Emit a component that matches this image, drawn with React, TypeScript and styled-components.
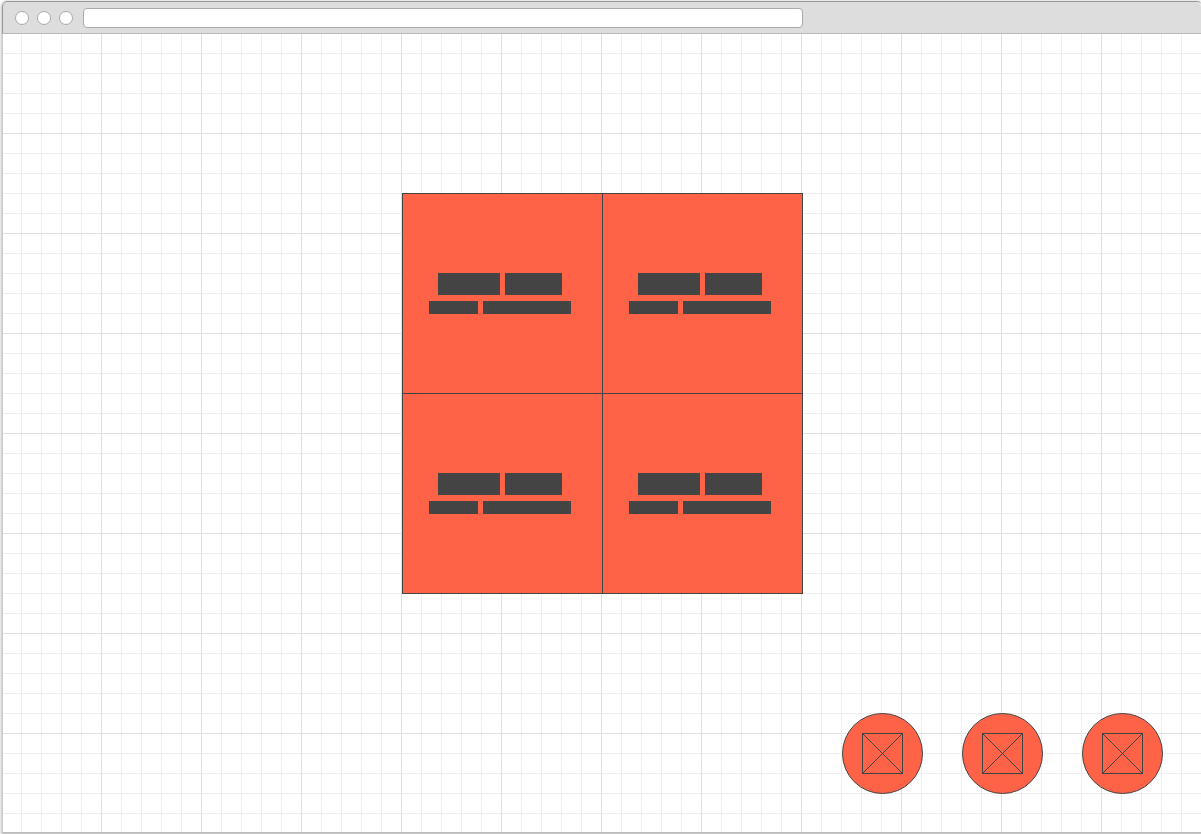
import React from "react";
import styled, { createGlobalStyle } from "styled-components";

const ink = "#444444";
const tomato = "#ff6347";

const GlobalStyle = createGlobalStyle`
  *, *::before, *::after { box-sizing: border-box; }
  html { overflow: clip; }
  body {
    margin: 0;
    background: #ffffff;
    font-family: "Liberation Sans", Arial, sans-serif;
  }
`;

const Window = styled.div`
  display: flex;
  flex-direction: column;
  min-height: calc(100vh - 2px);
  margin: 1px -1px 1px 2px;
  border: 1px solid #cccccc;
  border-top-color: #999999;
  border-bottom-color: #bbbbbb;
  border-radius: 5px 5px 0 0;
  box-shadow: 0 1px 3px 1px rgba(0, 0, 0, 0.25);
`;

const TitleBar = styled.header`
  display: flex;
  align-items: center;
  gap: 10px;
  height: 32px;
  margin-left: -1px;
  padding: 0 12px;
  border-left: 1px solid #999999;
  border-bottom: 1px solid #bbbbbb;
  border-radius: 5px 5px 0 0;
  background: #dddddd;
`;

const WindowControls = styled.div`
  display: flex;
  gap: 8px;
`;

const WindowButton = styled.button`
  width: 14px;
  height: 14px;
  padding: 0;
  border: 1px solid #aaaaaa;
  border-radius: 50%;
  background: #ffffff;
`;

const AddressBar = styled.input`
  width: 720px;
  min-width: 0;
  height: 20px;
  padding: 0 6px;
  border: 1px solid #aaaaaa;
  border-radius: 4px;
  background: #ffffff;
  font-size: 12px;
  outline: none;
`;

const Canvas = styled.main`
  flex: 1;
  display: flex;
  flex-direction: column;
  padding: 159px 38px 38px 39px;
  background-color: #ffffff;
  background-image:
    linear-gradient(to right, #e0e0e0 1px, transparent 1px),
    linear-gradient(to bottom, #e0e0e0 1px, transparent 1px),
    linear-gradient(to right, #eeeeee 1px, transparent 1px),
    linear-gradient(to bottom, #eeeeee 1px, transparent 1px);
  background-size: 100px 100px, 100px 100px, 20px 20px, 20px 20px;
  background-position: 98px 99px, 98px 99px, 18px 19px, 18px 19px;
`;

const Board = styled.section`
  display: grid;
  grid-template-columns: repeat(2, 200px);
  grid-auto-rows: 200px;
  align-self: center;
  border: solid ${ink};
  border-width: 1px 0 0 1px;
`;

const Tile = styled.article`
  display: flex;
  flex-direction: column;
  align-items: center;
  justify-content: center;
  gap: 6px;
  padding-right: 5px;
  border: solid ${ink};
  border-width: 0 1px 1px 0;
  background: ${tomato};
`;

const WordRow = styled.div`
  display: flex;
  gap: 5px;
`;

const Word = styled.span<{ $width: number; $height: number }>`
  width: ${(p) => p.$width}px;
  height: ${(p) => p.$height}px;
  background: ${ink};
`;

const Actions = styled.nav`
  display: flex;
  justify-content: flex-end;
  gap: 39px;
  margin-top: auto;
`;

const RoundButton = styled.button`
  display: grid;
  place-items: center;
  width: 81px;
  height: 81px;
  padding: 0;
  border: 1px solid ${ink};
  border-radius: 50%;
  background: ${tomato};
`;

const PlaceholderIcon = () => (
  <svg width="41" height="41" viewBox="0 0 41 41" fill="none" stroke={ink} aria-hidden="true">
    <rect x="0.5" y="0.5" width="40" height="40" />
    <path d="M0.5 0.5L40.5 40.5M40.5 0.5L0.5 40.5" />
  </svg>
);

const tiles = [1, 2, 3, 4];
const actions = [1, 2, 3];

export default function App() {
  return (
    <>
      <GlobalStyle />
      <Window>
        <TitleBar>
          <WindowControls>
            <WindowButton type="button" aria-label="Close" />
            <WindowButton type="button" aria-label="Minimize" />
            <WindowButton type="button" aria-label="Maximize" />
          </WindowControls>
          <AddressBar type="text" aria-label="Address" />
        </TitleBar>
        <Canvas>
          <Board>
            {tiles.map((id) => (
              <Tile key={id}>
                <WordRow>
                  <Word $width={62} $height={22} />
                  <Word $width={57} $height={22} />
                </WordRow>
                <WordRow>
                  <Word $width={49} $height={13} />
                  <Word $width={88} $height={13} />
                </WordRow>
              </Tile>
            ))}
          </Board>
          <Actions>
            {actions.map((id) => (
              <RoundButton key={id} type="button" aria-label={`Action ${id}`}>
                <PlaceholderIcon />
              </RoundButton>
            ))}
          </Actions>
        </Canvas>
      </Window>
    </>
  );
}
